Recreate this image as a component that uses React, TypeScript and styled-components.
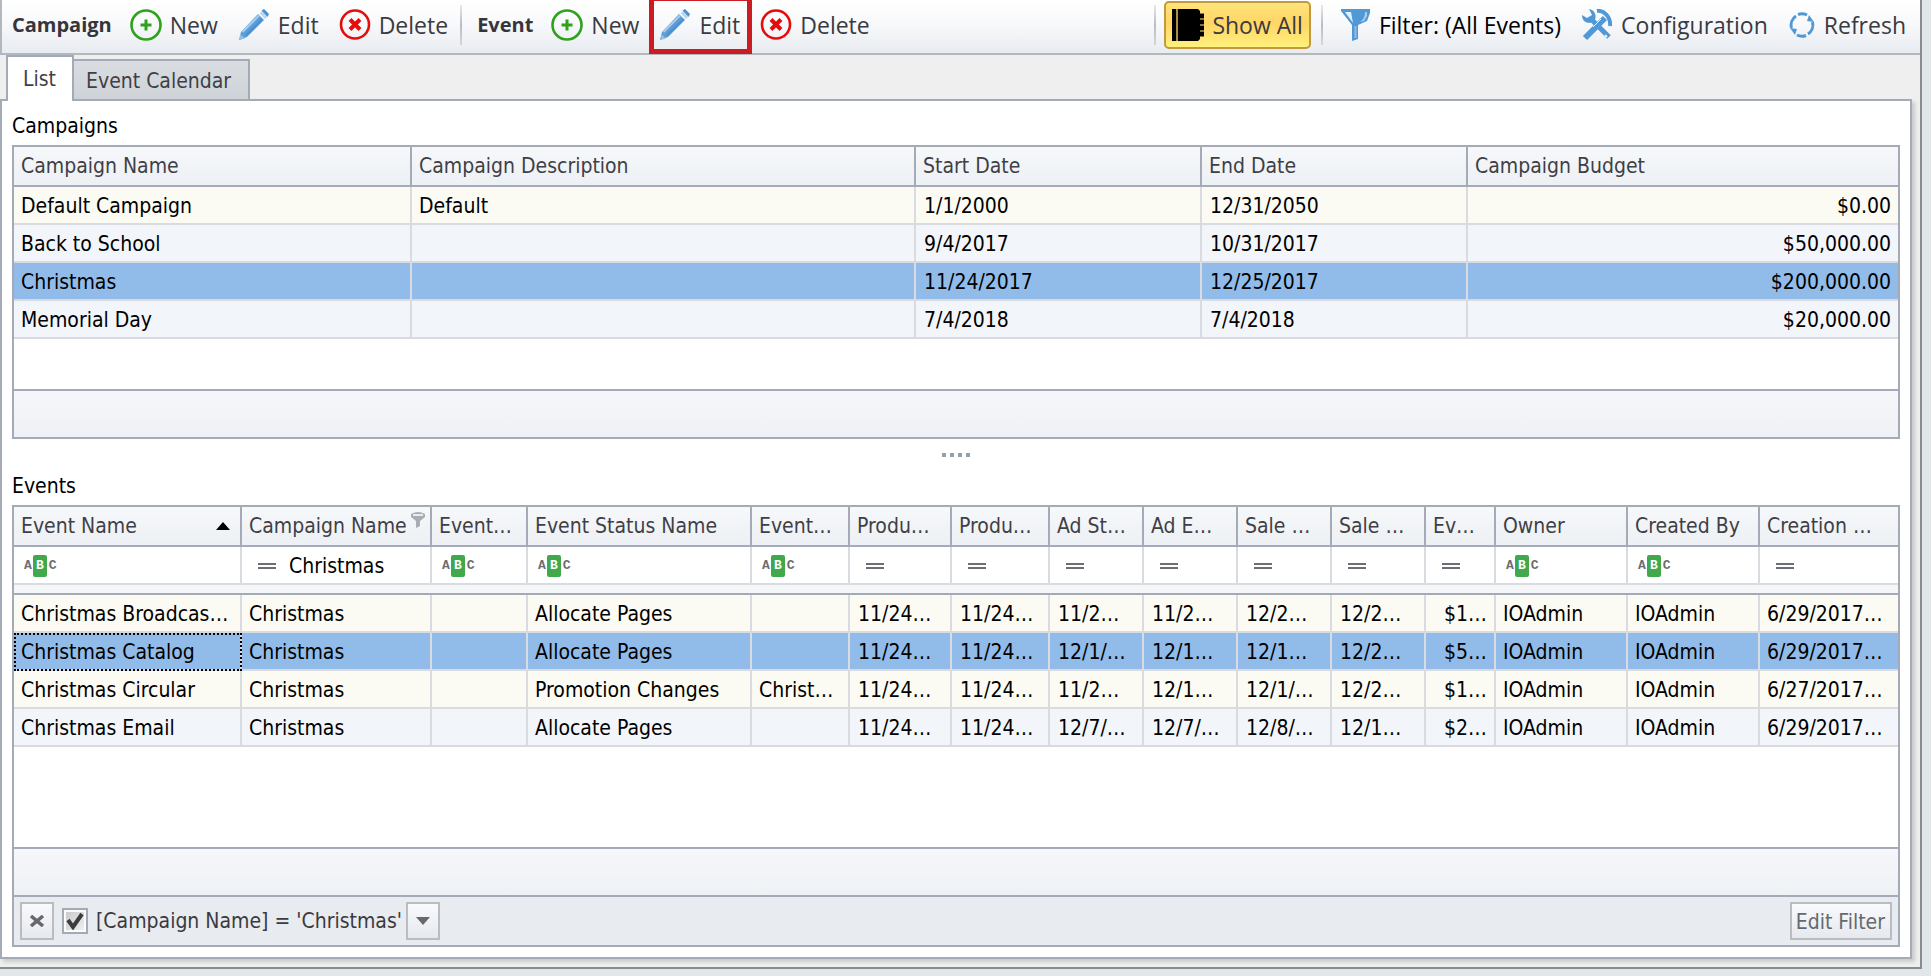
import React, { useState } from "react";
import styled, { createGlobalStyle, css } from "styled-components";

const line = "#a5abb6";
const cellLine = "#d9dbe0";
const gridFont = '"DejaVu Sans Condensed", "DejaVu Sans", sans-serif';
const barFont = '"Open Sans", "Noto Sans", sans-serif';

const GlobalStyle = createGlobalStyle`
  *, *::before, *::after { box-sizing: border-box; }
  body {
    margin: 0;
    background: #e1e6e9;
    color: #000;
    font: 21px/28px ${gridFont};
  }
  button, input { font: inherit; color: inherit; }
`;

const Page = styled.div`
  display: flex;
  min-height: 100vh;
  padding: 0 9px 7px 0;
`;

const Window = styled.div`
  flex: 1;
  min-width: 0;
  display: flex;
  flex-direction: column;
  background: #efefef;
  border: solid #878c94;
  border-width: 0 2px 2px 0;
`;

const Toolbar = styled.header`
  display: flex;
  align-items: center;
  height: 55px;
  padding: 0 4px 4px 10px;
  border: solid #b3b7be;
  border-width: 0 0 2px 2px;
  background: linear-gradient(#fff, #f8f9fb 45%, #e8ebf0);
  font: 23px/32px ${barFont};
  color: #3a3a40;
  white-space: nowrap;
`;

const GroupLabel = styled.h2`
  margin: 0 8px 0 0;
  font-size: 20px;
  line-height: 32px;
  font-weight: 700;
  color: #35353a;
`;

const ToolButton = styled.button<{ $pressed?: boolean; $marked?: boolean; $strong?: boolean }>`
  position: relative;
  display: flex;
  align-items: center;
  gap: 8px;
  height: 48px;
  padding: 0 8px;
  border: 2px solid transparent;
  border-radius: 5px;
  background: none;
  ${(p) => p.$strong && css`color: #000;`}
  ${(p) =>
    p.$pressed &&
    css`
      padding: 0 6px;
      border-color: #c09a3c;
      background: linear-gradient(#ffe47c, #ffd566 45%, #fff07c);
    `}
  ${(p) =>
    p.$marked &&
    css`
      &::after {
        content: "";
        position: absolute;
        inset: -7px -4px -7px -2px;
        border: 5px solid #cb1c24;
      }
    `}
`;

const Separator = styled.span<{ $end?: boolean }>`
  width: 2px;
  height: 40px;
  margin: ${(p) => (p.$end ? "0 8px 0 10px" : "0 15px 0 2px")};
  background: linear-gradient(#e6e8ec, #b9bcc2 50%, #d4d6da);
`;

const Spacer = styled.span`
  flex: 1;
`;

const Tabs = styled.div`
  display: flex;
  align-items: flex-end;
  height: 46px;
  padding-left: 6px;
  margin-bottom: -2px;
`;

const Tab = styled.button<{ $active?: boolean }>`
  height: 42px;
  padding: 2px 17px 0 12px;
  border: 2px solid ${line};
  border-left-width: 0;
  background: linear-gradient(#d9dde1, #ced3d7);
  color: #3f3f46;
  ${(p) =>
    p.$active &&
    css`
      height: 46px;
      padding: 0 16px 0 15px;
      border-left-width: 2px;
      border-bottom: 0;
      background: #fff;
    `}
`;

const Panel = styled.main`
  flex: 1;
  display: flex;
  flex-direction: column;
  margin: 0 8px 8px 0;
  padding: 10px;
  border: 2px solid ${line};
  background: #fff;
  box-shadow: 3px 3px 4px rgba(0, 0, 0, 0.16);
`;

const TabStack = styled.div`
  position: relative;
  flex: 1;
  display: flex;
  flex-direction: column;
  ${Tabs} { z-index: 1; }
`;

const Title = styled.h3`
  margin: 0;
  height: 34px;
  font-size: 21px;
  line-height: 30px;
  font-weight: 400;
`;

const Grid = styled.section<{ $grow?: boolean }>`
  display: flex;
  flex-direction: column;
  border: 2px solid ${line};
  ${(p) => p.$grow && css`flex: 1;`}
`;

const GridBody = styled.div`
  flex: 1;
  min-height: 242px;
`;

const GridFooter = styled.div`
  height: 48px;
  border-top: 2px solid ${line};
  background: linear-gradient(#f6f7fa, #eef1f5);
`;

const Table = styled.table`
  width: 100%;
  table-layout: fixed;
  border-collapse: separate;
  border-spacing: 0;
`;

const HeadCell = styled.th`
  height: 40px;
  padding: 0 0 0 7px;
  border: solid ${line};
  border-width: 0 2px 2px 0;
  background: linear-gradient(#f6f8fa, #edf0f4);
  color: #3f3f46;
  font-weight: 400;
  text-align: left;
  white-space: nowrap;
  overflow: hidden;
  &:last-child { border-right: 0; }
`;

const HeadContent = styled.span<{ $sorted?: boolean }>`
  display: flex;
  align-items: center;
  justify-content: space-between;
  padding-right: ${(p) => (p.$sorted ? 10 : 5)}px;
`;

const FilterCell = styled.td`
  height: 38px;
  padding: 2px 0 0 10px;
  border: solid ${cellLine};
  border-width: 0 2px 2px 0;
  background: #fff;
  &:last-child { border-right: 0; }
`;

const FilterLabel = styled.label`
  display: flex;
  align-items: center;
`;

const FilterInput = styled.input`
  flex: 1;
  min-width: 0;
  height: 30px;
  padding: 0;
  border: 0;
  outline: 0;
  background: transparent;
`;

const Band = styled.td`
  height: 10px;
  padding: 0;
  background: #f5f6f8;
  border-bottom: 2px solid ${line};
`;

type Tone = "cream" | "blue" | "selected";
const tones: Record<Tone, string> = { cream: "#fbfbf3", blue: "#f2f5fa", selected: "#91bbe9" };

const Row = styled.tr<{ $tone: Tone }>`
  background: ${(p) => tones[p.$tone]};
`;

const Cell = styled.td<{ $kind?: "text" | "date" | "number"; $focused?: boolean }>`
  height: 38px;
  padding: 2px 7px 0 7px;
  border: solid ${cellLine};
  border-width: 0 2px 2px 0;
  white-space: nowrap;
  overflow: hidden;
  ${(p) => p.$kind === "date" && css`padding: 2px 0 0 8px;`}
  ${(p) => p.$kind === "number" && css`text-align: right;`}
  ${(p) => p.$focused && css`outline: 2px dotted #000; outline-offset: -2px;`}
  &:last-child { border-right: 0; }
`;

const Splitter = styled.div`
  display: flex;
  justify-content: center;
  gap: 4px;
  height: 32px;
  padding-top: 14px;
`;

const Dot = styled.span`
  width: 4px;
  height: 4px;
  background: #95a0ad;
`;

const AbcBadge = styled.span`
  display: flex;
  align-items: center;
  height: 22px;
  margin-right: 6px;
  color: #6b6e73;
  font: 700 13px/22px "Liberation Mono", monospace;
`;

const AbcMiddle = styled.span`
  width: 14px;
  margin: 0 2px 0 1px;
  border-radius: 2px;
  background: #41a94c;
  color: #fff;
  text-align: center;
`;

const EqualsMark = styled.span`
  width: 18px;
  height: 6px;
  margin: 0 13px 0 6px;
  border: solid #6b6e73;
  border-width: 2px 0;
`;

const FilterBar = styled.div`
  display: flex;
  align-items: center;
  height: 50px;
  padding: 0 6px;
  border-top: 2px solid ${line};
  background: #e8ebf0;
  color: #3a3a40;
`;

const SmallButton = styled.button`
  display: flex;
  align-items: center;
  justify-content: center;
  min-width: 34px;
  height: 38px;
  padding: 0;
  border: 2px solid #b9bdc2;
  background: linear-gradient(#f8fafc, #e6e9ee);
  color: #65696f;
`;

const WideButton = styled(SmallButton)`
  padding: 2px 5px 0 4px;
`;

const CheckLabel = styled.label`
  position: relative;
  display: flex;
  align-items: center;
  gap: 8px;
  margin: 0 4px 0 8px;
  white-space: nowrap;
`;

const CheckBox = styled.input`
  appearance: none;
  width: 26px;
  height: 26px;
  margin: 0;
  border: 2px solid ${line};
  background: linear-gradient(135deg, #c6c6c6, #f2f2f2);
  box-shadow: inset 0 0 0 2px #fbfbfb;
  &:not(:checked) + svg { display: none; }
`;

const CheckMark = styled.svg`
  position: absolute;
  left: 4px;
  pointer-events: none;
`;

const NewIcon = () => (
  <svg width="32" height="32" viewBox="0 0 32 32" fill="none" stroke="#2da31c">
    <circle cx="16" cy="16" r="14.5" strokeWidth="2.6" />
    <path d="M16 10.500v11M10.500 16h11" strokeWidth="3" />
  </svg>
);

const DeleteIcon = () => (
  <svg width="32" height="32" viewBox="0 0 32 32" fill="none" stroke="#e60c0c">
    <circle cx="16" cy="15.500" r="14" strokeWidth="2.6" />
    <path d="M11 10.500l10 10M21 10.500l-10 10" strokeWidth="4" />
  </svg>
);

const EditIcon = () => (
  <svg width="32" height="32" viewBox="0 0 32 32">
    <path d="M1 31l2-8L20 5l6 6L9 28z" fill="#5b9dd8" />
    <path d="M4.500 23L21 6.500" stroke="#a9cdee" strokeWidth="2" />
    <path d="M8 26.500L24.500 10" stroke="#4a90d0" strokeWidth="2" />
    <path d="M1 31l1.500-6 4.500 4.500z" fill="#8fbde6" />
    <path d="M21.500 4l2.500-1.500 5 5.500-2 2z" fill="#b8d5f0" />
    <path d="M23.500 1.500L26 0l5 5-1.500 3z" fill="#4a90d0" />
  </svg>
);

const BookIcon = () => (
  <svg width="32" height="32" viewBox="0 0 32 32">
    <path d="M0 0h4v32H0zM6 0h20l2 2v28l-2 2H6z" fill="#000" />
    <path d="M5 0v32" stroke="#a98d45" strokeWidth="2" />
    <path d="M30 4v24" stroke="#8a7338" strokeWidth="4" />
    <path d="M30 5v24" stroke="#000" strokeWidth="4" strokeDasharray="4 2" />
  </svg>
);

const FunnelIcon = () => (
  <svg width="30" height="32" viewBox="0 0 30 32">
    <path d="M0 0h29v4l-3 8-9 4v14l-6 2V16L0 2z" fill="#5199d6" />
    <path d="M4 3h6l2 11z" fill="#e3effa" />
    <path d="M24 3h2v4l-3 5-4 1c3-2 5-5 5-10z" fill="#a9cdee" />
    <path d="M14.500 17v12" stroke="#8fbde6" strokeWidth="2" />
  </svg>
);

const ToolsIcon = () => (
  <svg width="32" height="32" viewBox="0 0 32 32" fill="none" stroke="#5199d6">
    <path d="M11 11l17 17" strokeWidth="5" />
    <path d="M4 29l20-20" strokeWidth="6" />
    <path d="M16 2c6-1 14 5 13 15" strokeWidth="4" />
    <path d="M8 0c5 1 8 5 6 11l-5 3c-5 0-8-3-8-8l5 3 5-3z" fill="#5199d6" stroke="none" />
    <path d="M12 18l8-8" stroke="#e9f2fb" strokeWidth="1" />
    <path d="M24 26l2 2" stroke="#e9f2fb" strokeWidth="2" />
  </svg>
);

const RefreshIcon = () => (
  <svg width="28" height="28" viewBox="0 0 28 28" fill="none" stroke="#5199d6" strokeWidth="3">
    <path d="M3.500 17A11 11 0 0 1 8 5" />
    <path d="M24.500 11A11 11 0 0 1 20 23" />
    <path d="M10 3.500a11 11 0 0 1 9 0.500M18 24.500a11 11 0 0 1-9-0.500" />
    <path d="M21 4l5 7-7-1zM7 24l-5-7 7 1z" fill="#5199d6" stroke="none" />
  </svg>
);

const SortArrow = () => (
  <svg width="14" height="8" viewBox="0 0 14 8">
    <path d="M7 0l7 8H0z" fill="#000" />
  </svg>
);

const PinFunnel = () => (
  <svg width="14" height="16" viewBox="0 0 14 16">
    <path d="M0 2Q7-2 14 2v3L9 9v5l-4 2V9L0 5z" fill="#a9adb3" />
    <path d="M2 3h10" stroke="#e9ecef" strokeWidth="2" />
  </svg>
);

const PinHolder = styled.span`
  display: flex;
  height: 28px;
`;

const campaignColumns: [string, number][] = [
  ["Campaign Name", 398],
  ["Campaign Description", 504],
  ["Start Date", 286],
  ["End Date", 266],
  ["Campaign Budget", 430],
];

const campaigns: { tone: Tone; values: string[] }[] = [
  { tone: "cream", values: ["Default Campaign", "Default", "1/1/2000", "12/31/2050", "$0.00"] },
  { tone: "blue", values: ["Back to School", "", "9/4/2017", "10/31/2017", "$50,000.00"] },
  { tone: "selected", values: ["Christmas", "", "11/24/2017", "12/25/2017", "$200,000.00"] },
  { tone: "blue", values: ["Memorial Day", "", "7/4/2018", "7/4/2018", "$20,000.00"] },
];

type EventColumn = { name: string; width: number; filter: "abc" | "eq"; kind?: "date" | "number"; value?: string };

const eventColumns: EventColumn[] = [
  { name: "Event Name", width: 228, filter: "abc" },
  { name: "Campaign Name", width: 190, filter: "eq", value: "Christmas" },
  { name: "Event…", width: 96, filter: "abc" },
  { name: "Event Status Name", width: 224, filter: "abc" },
  { name: "Event…", width: 98, filter: "abc" },
  { name: "Produ…", width: 102, filter: "eq", kind: "date" },
  { name: "Produ…", width: 98, filter: "eq", kind: "date" },
  { name: "Ad St…", width: 94, filter: "eq", kind: "date" },
  { name: "Ad E…", width: 94, filter: "eq", kind: "date" },
  { name: "Sale …", width: 94, filter: "eq", kind: "date" },
  { name: "Sale …", width: 94, filter: "eq", kind: "date" },
  { name: "Ev…", width: 70, filter: "eq", kind: "number" },
  { name: "Owner", width: 132, filter: "abc" },
  { name: "Created By", width: 132, filter: "abc" },
  { name: "Creation …", width: 138, filter: "eq" },
];

const events: { tone: Tone; values: string[] }[] = [
  {
    tone: "cream",
    values: ["Christmas Broadcas…", "Christmas", "", "Allocate Pages", "", "11/24…", "11/24…", "11/2…", "11/2…", "12/2…", "12/2…", "$1…", "IOAdmin", "IOAdmin", "6/29/2017…"],
  },
  {
    tone: "selected",
    values: ["Christmas Catalog", "Christmas", "", "Allocate Pages", "", "11/24…", "11/24…", "12/1/…", "12/1…", "12/1…", "12/2…", "$5…", "IOAdmin", "IOAdmin", "6/29/2017…"],
  },
  {
    tone: "cream",
    values: ["Christmas Circular", "Christmas", "", "Promotion Changes", "Christ…", "11/24…", "11/24…", "11/2…", "12/1…", "12/1/…", "12/2…", "$1…", "IOAdmin", "IOAdmin", "6/27/2017…"],
  },
  {
    tone: "blue",
    values: ["Christmas Email", "Christmas", "", "Allocate Pages", "", "11/24…", "11/24…", "12/7/…", "12/7/…", "12/8/…", "12/1…", "$2…", "IOAdmin", "IOAdmin", "6/29/2017…"],
  },
];

const Col = styled.col<{ $width: number }>`
  width: ${(p) => p.$width}px;
`;

const CampaignGrid = () => (
  <Grid>
    <GridBody>
      <Table>
        <colgroup>
          {campaignColumns.map(([name, width]) => (
            <Col key={name} $width={width} />
          ))}
        </colgroup>
        <thead>
          <tr>
            {campaignColumns.map(([name]) => (
              <HeadCell key={name}>{name}</HeadCell>
            ))}
          </tr>
        </thead>
        <tbody>
          {campaigns.map((c) => (
            <Row key={c.values[0]} $tone={c.tone}>
              {c.values.map((v, i) => (
                <Cell key={i} $kind={i === 4 ? "number" : i > 1 ? "date" : "text"}>{v}</Cell>
              ))}
            </Row>
          ))}
        </tbody>
      </Table>
    </GridBody>
    <GridFooter />
  </Grid>
);

const EventGrid = () => {
  const [checked, setChecked] = useState(true);
  return (
    <Grid $grow>
      <GridBody>
        <Table>
          <colgroup>
            {eventColumns.map((c, i) => (
              <Col key={i} $width={c.width} />
            ))}
          </colgroup>
          <thead>
            <tr>
              {eventColumns.map((c, i) => (
                <HeadCell key={i}>
                  {i < 2 ? (
                    <HeadContent $sorted={i === 0}>
                      {c.name}
                      {i === 0 ? <SortArrow /> : <PinHolder><PinFunnel /></PinHolder>}
                    </HeadContent>
                  ) : (
                    c.name
                  )}
                </HeadCell>
              ))}
            </tr>
            <tr>
              {eventColumns.map((c, i) => (
                <FilterCell key={i}>
                  <FilterLabel>
                    {c.filter === "abc" ? (
                      <AbcBadge>A<AbcMiddle>B</AbcMiddle>C</AbcBadge>
                    ) : (
                      <EqualsMark />
                    )}
                    <FilterInput defaultValue={c.value} aria-label={`Filter ${c.name}`} />
                  </FilterLabel>
                </FilterCell>
              ))}
            </tr>
            <tr>
              <Band colSpan={eventColumns.length} />
            </tr>
          </thead>
          <tbody>
            {events.map((e) => (
              <Row key={e.values[0]} $tone={e.tone}>
                {e.values.map((v, i) => (
                  <Cell key={i} $kind={eventColumns[i].kind} $focused={i === 0 && e.tone === "selected"}>{v}</Cell>
                ))}
              </Row>
            ))}
          </tbody>
        </Table>
      </GridBody>
      <GridFooter />
      <FilterBar>
        <SmallButton aria-label="Clear filter">
          <svg width="16" height="12" viewBox="0 0 16 12">
            <path d="M2 1l12 10M14 1L2 11" stroke="#65696f" strokeWidth="3.5" />
          </svg>
        </SmallButton>
        <CheckLabel>
          <CheckBox type="checkbox" checked={checked} onChange={() => setChecked(!checked)} />
          <CheckMark width="18" height="18" viewBox="0 0 18 18">
            <path d="M2 8l5 7 9-13" fill="none" stroke="#3c3c40" strokeWidth="4" />
          </CheckMark>
          [Campaign Name] = 'Christmas'
        </CheckLabel>
        <SmallButton aria-label="Recent filters">
          <svg width="14" height="8" viewBox="0 0 14 8">
            <path d="M0 0h14L7 8z" fill="#65696f" />
          </svg>
        </SmallButton>
        <Spacer />
        <WideButton>Edit Filter</WideButton>
      </FilterBar>
    </Grid>
  );
};

export default function App() {
  return (
    <>
      <GlobalStyle />
      <Page>
        <Window>
          <Toolbar>
            <GroupLabel>Campaign</GroupLabel>
            <ToolButton><NewIcon />New</ToolButton>
            <ToolButton><EditIcon />Edit</ToolButton>
            <ToolButton><DeleteIcon />Delete</ToolButton>
            <Separator />
            <GroupLabel>Event</GroupLabel>
            <ToolButton><NewIcon />New</ToolButton>
            <ToolButton $marked><EditIcon />Edit</ToolButton>
            <ToolButton><DeleteIcon />Delete</ToolButton>
            <Spacer />
            <Separator $end />
            <ToolButton $pressed aria-pressed="true"><BookIcon />Show All</ToolButton>
            <Separator $end />
            <ToolButton $strong><FunnelIcon />Filter: (All Events)</ToolButton>
            <ToolButton><ToolsIcon />Configuration</ToolButton>
            <ToolButton><RefreshIcon />Refresh</ToolButton>
          </Toolbar>
          <TabStack>
            <Tabs role="tablist">
              <Tab role="tab" aria-selected="true" $active>List</Tab>
              <Tab role="tab" aria-selected="false">Event Calendar</Tab>
            </Tabs>
            <Panel>
              <Title>Campaigns</Title>
              <CampaignGrid />
              <Splitter><Dot /><Dot /><Dot /><Dot /></Splitter>
              <Title>Events</Title>
              <EventGrid />
            </Panel>
          </TabStack>
        </Window>
      </Page>
    </>
  );
}
